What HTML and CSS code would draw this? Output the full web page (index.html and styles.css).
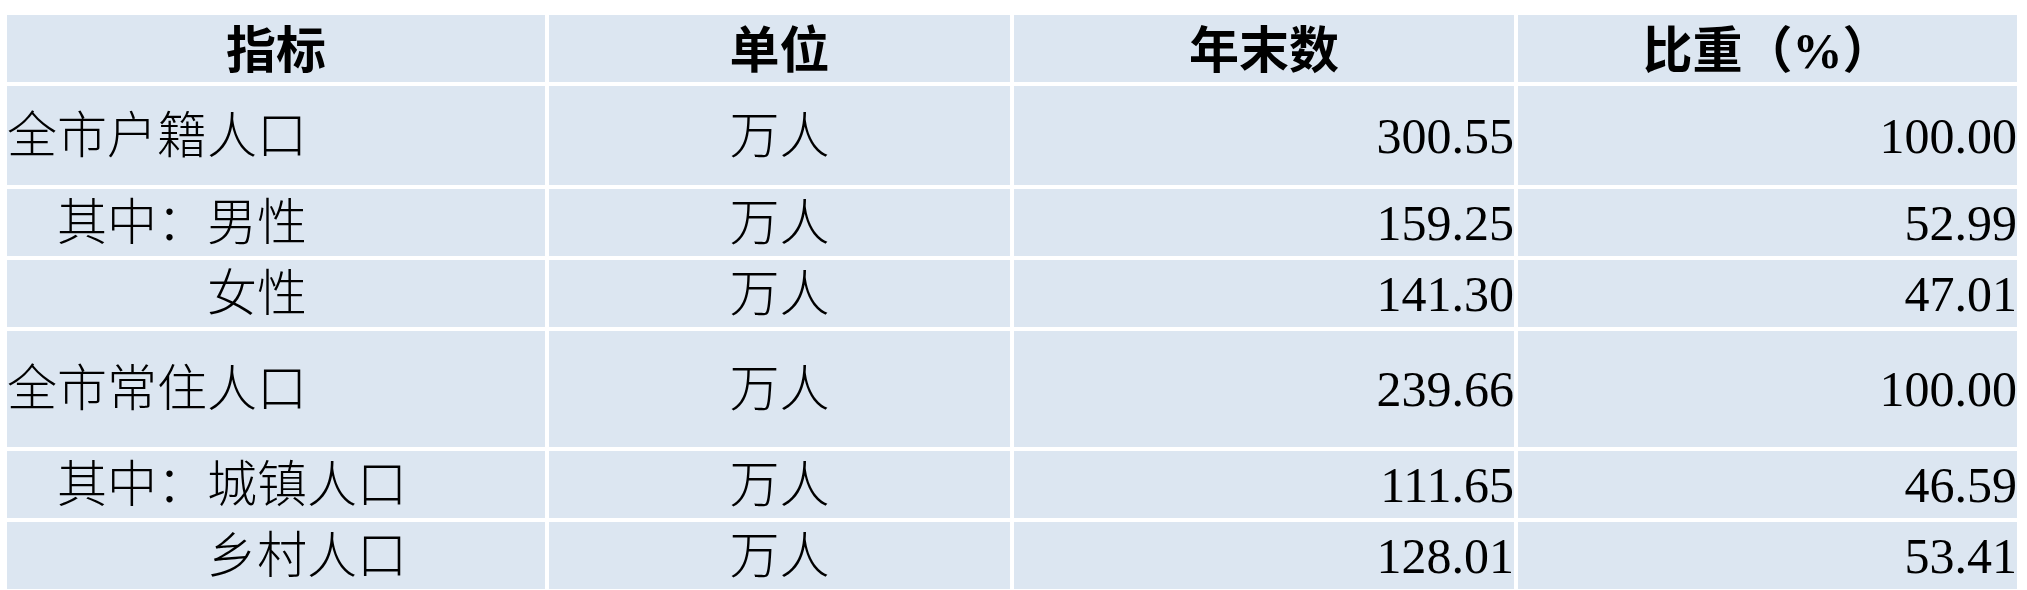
FILE: index.html
```html
<!DOCTYPE html>
<html lang="zh-CN">
<head>
<meta charset="utf-8">
<title>人口统计</title>
<link rel="stylesheet" href="styles.css">
</head>
<body>
<table class="stats">
  <colgroup>
    <col class="c-name">
    <col class="c-unit">
    <col class="c-year">
    <col class="c-share">
  </colgroup>
  <thead>
    <tr class="r-head">
      <th>指标</th>
      <th>单位</th>
      <th>年末数</th>
      <th>比重（%）</th>
    </tr>
  </thead>
  <tbody>
    <tr class="r-mid">
      <td class="name">全市户籍人口</td>
      <td class="unit">万人</td>
      <td class="num">300.55</td>
      <td class="num">100.00</td>
    </tr>
    <tr class="r-short">
      <td class="name">　其中：男性</td>
      <td class="unit">万人</td>
      <td class="num">159.25</td>
      <td class="num">52.99</td>
    </tr>
    <tr class="r-short">
      <td class="name">　　　　女性</td>
      <td class="unit">万人</td>
      <td class="num">141.30</td>
      <td class="num">47.01</td>
    </tr>
    <tr class="r-tall">
      <td class="name">全市常住人口</td>
      <td class="unit">万人</td>
      <td class="num">239.66</td>
      <td class="num">100.00</td>
    </tr>
    <tr class="r-short">
      <td class="name">　其中：城镇人口</td>
      <td class="unit">万人</td>
      <td class="num">111.65</td>
      <td class="num">46.59</td>
    </tr>
    <tr class="r-short">
      <td class="name">　　　　乡村人口</td>
      <td class="unit">万人</td>
      <td class="num">128.01</td>
      <td class="num">53.41</td>
    </tr>
  </tbody>
</table>
</body>
</html>
```

FILE: styles.css
```css
html, body {
  margin: 0;
  padding: 0;
  background: #ffffff;
}

body {
  font-family: "Liberation Serif", "Times New Roman", "Noto Sans CJK SC", serif;
  color: #000000;
}

.stats {
  margin: 11px 0 0 3px;
  border-collapse: separate;
  border-spacing: 4px;
  table-layout: fixed;
  width: 2018px;
  background: #ffffff;
}

.c-name { width: 538px; }
.c-unit { width: 461px; }
.c-year { width: 500px; }
.c-share { width: 499px; }

.stats th,
.stats td {
  background: #dce6f1;
  padding: 0;
  font-family: "Liberation Serif", "Times New Roman", "Noto Sans CJK SC", serif;
  font-size: 50px;
  line-height: 1;
  vertical-align: middle;
  white-space: pre;
  overflow: hidden;
}

.stats th {
  font-weight: 700;
  text-align: center;
  padding-top: 5px;
}

.stats td {
  font-weight: 300;
}

.r-head { height: 67px; }
.r-mid { height: 99px; }
.r-short { height: 67px; }
.r-tall { height: 116px; }

.name {
  text-align: left;
  padding-left: 1px;
}

.unit {
  text-align: center;
}

.num {
  text-align: right;
  padding-right: 2px;
}
```
